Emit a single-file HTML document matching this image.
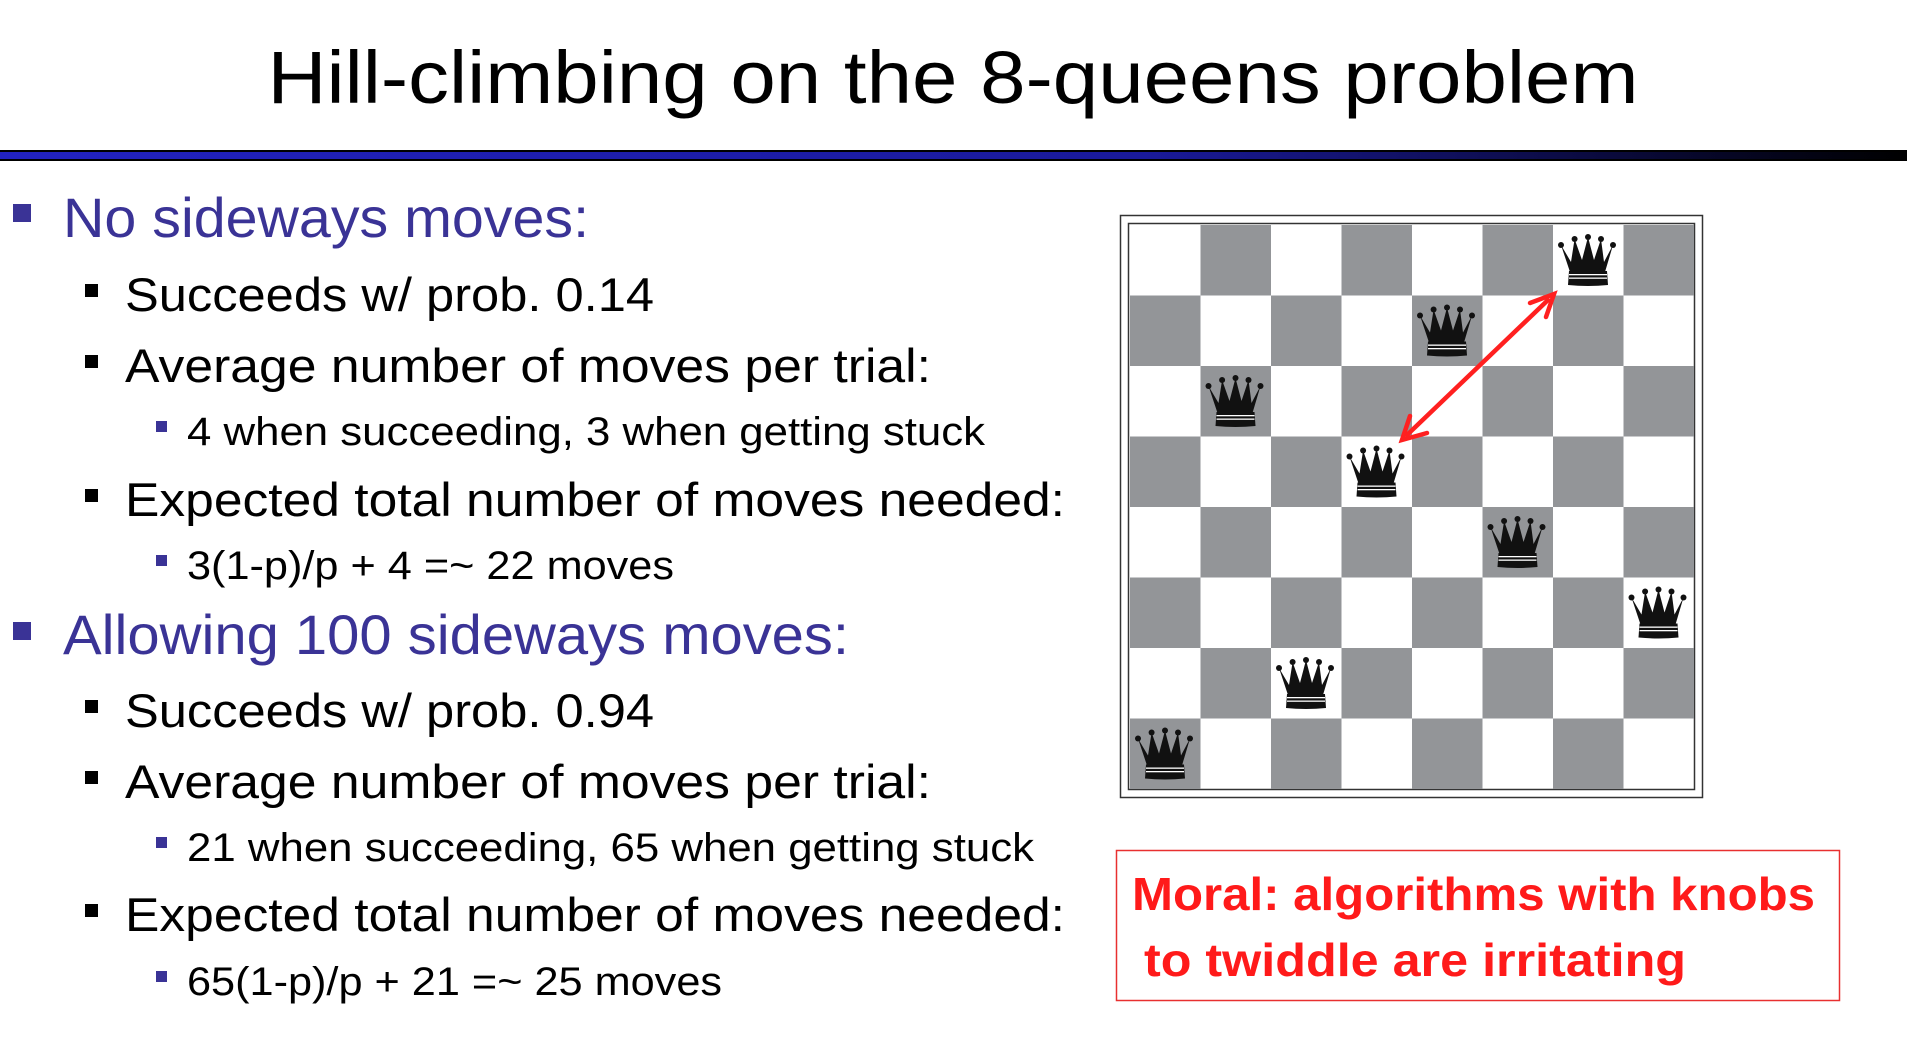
<!DOCTYPE html>
<html><head><meta charset="utf-8"><style>
html,body{margin:0;padding:0;background:#fff;width:1907px;height:1058px;overflow:hidden}
svg{display:block}
</style></head><body>
<svg width="1907" height="1058" viewBox="0 0 1907 1058" xmlns="http://www.w3.org/2000/svg" font-family="'Liberation Sans', sans-serif">
<defs>
<linearGradient id="rule" x1="0" x2="1" y1="0" y2="0">
<stop offset="0" stop-color="#2222c0"/><stop offset="0.6" stop-color="#1a1a9a"/><stop offset="1" stop-color="#000"/>
</linearGradient>
<g id="q">
<polygon points="8,20 18,37 21.6,14 29,35 35,12 41,35 48,14 51,37 60,20 52,47 17,47" fill="#111"/>
<circle cx="8" cy="20" r="3" fill="#111"/><circle cx="21.6" cy="14" r="3" fill="#111"/><circle cx="35" cy="12" r="3" fill="#111"/><circle cx="48" cy="14" r="3" fill="#111"/><circle cx="60" cy="20" r="3" fill="#111"/>
<path d="M16,46 H54 L55,60 Q35,62 15,60 Z" fill="#111"/>
<rect x="16" y="49" width="38" height="1.3" fill="#fff"/>
<rect x="16" y="52.5" width="38" height="1.3" fill="#fff"/>
</g>
</defs>
<text x="953" y="103" font-size="74" text-anchor="middle" textLength="1371" lengthAdjust="spacingAndGlyphs" fill="#000">Hill-climbing on the 8-queens problem</text>
<rect x="0" y="150" width="1907" height="11" fill="#000"/>
<rect x="0" y="152" width="1907" height="7" fill="url(#rule)"/>

<g fill="#3a3396">
<rect x="13" y="204" width="18" height="18"/>
<rect x="13" y="622" width="18" height="18"/>
<rect x="156" y="421" width="11" height="11"/>
<rect x="156" y="555" width="11" height="11"/>
<rect x="156" y="837" width="11" height="11"/>
<rect x="156" y="971" width="11" height="11"/>
</g>
<g fill="#000">
<rect x="85" y="284" width="13" height="13"/>
<rect x="85" y="355" width="13" height="13"/>
<rect x="85" y="489" width="13" height="13"/>
<rect x="85" y="700" width="13" height="13"/>
<rect x="85" y="771" width="13" height="13"/>
<rect x="85" y="904" width="13" height="13"/>
</g>
<g fill="#3a3396" font-size="56">
<text x="63" y="237" textLength="526" lengthAdjust="spacingAndGlyphs">No sideways moves:</text>
<text x="63" y="654" textLength="786" lengthAdjust="spacingAndGlyphs">Allowing 100 sideways moves:</text>
</g>
<g fill="#000" font-size="47">
<text x="125" y="311" textLength="529" lengthAdjust="spacingAndGlyphs">Succeeds w/ prob. 0.14</text>
<text x="125" y="382" textLength="806" lengthAdjust="spacingAndGlyphs">Average number of moves per trial:</text>
<text x="125" y="516" textLength="940" lengthAdjust="spacingAndGlyphs">Expected total number of moves needed:</text>
<text x="125" y="727" textLength="529" lengthAdjust="spacingAndGlyphs">Succeeds w/ prob. 0.94</text>
<text x="125" y="798" textLength="806" lengthAdjust="spacingAndGlyphs">Average number of moves per trial:</text>
<text x="125" y="931" textLength="940" lengthAdjust="spacingAndGlyphs">Expected total number of moves needed:</text>
</g>
<g fill="#000" font-size="40">
<text x="187" y="445" textLength="798" lengthAdjust="spacingAndGlyphs">4 when succeeding, 3 when getting stuck</text>
<text x="187" y="579" textLength="487" lengthAdjust="spacingAndGlyphs">3(1-p)/p + 4 =~ 22 moves</text>
<text x="187" y="861" textLength="847" lengthAdjust="spacingAndGlyphs">21 when succeeding, 65 when getting stuck</text>
<text x="187" y="995" textLength="535" lengthAdjust="spacingAndGlyphs">65(1-p)/p + 21 =~ 25 moves</text>
</g>

<!-- board -->
<rect x="1120.5" y="215.5" width="582" height="582" fill="#fff" stroke="#333" stroke-width="1.5"/>
<rect x="1128.5" y="223.5" width="566" height="566" fill="#fff" stroke="#333" stroke-width="1.5"/>
<g fill="#939598">
<rect x="1200.5" y="225" width="70.5" height="70.5"/><rect x="1341.5" y="225" width="70.5" height="70.5"/><rect x="1482.5" y="225" width="70.5" height="70.5"/><rect x="1623.5" y="225" width="70.5" height="70.5"/>
<rect x="1130" y="295.5" width="70.5" height="70.5"/><rect x="1271" y="295.5" width="70.5" height="70.5"/><rect x="1412" y="295.5" width="70.5" height="70.5"/><rect x="1553" y="295.5" width="70.5" height="70.5"/>
<rect x="1200.5" y="366" width="70.5" height="70.5"/><rect x="1341.5" y="366" width="70.5" height="70.5"/><rect x="1482.5" y="366" width="70.5" height="70.5"/><rect x="1623.5" y="366" width="70.5" height="70.5"/>
<rect x="1130" y="436.5" width="70.5" height="70.5"/><rect x="1271" y="436.5" width="70.5" height="70.5"/><rect x="1412" y="436.5" width="70.5" height="70.5"/><rect x="1553" y="436.5" width="70.5" height="70.5"/>
<rect x="1200.5" y="507" width="70.5" height="70.5"/><rect x="1341.5" y="507" width="70.5" height="70.5"/><rect x="1482.5" y="507" width="70.5" height="70.5"/><rect x="1623.5" y="507" width="70.5" height="70.5"/>
<rect x="1130" y="577.5" width="70.5" height="70.5"/><rect x="1271" y="577.5" width="70.5" height="70.5"/><rect x="1412" y="577.5" width="70.5" height="70.5"/><rect x="1553" y="577.5" width="70.5" height="70.5"/>
<rect x="1200.5" y="648" width="70.5" height="70.5"/><rect x="1341.5" y="648" width="70.5" height="70.5"/><rect x="1482.5" y="648" width="70.5" height="70.5"/><rect x="1623.5" y="648" width="70.5" height="70.5"/>
<rect x="1130" y="718.5" width="70.5" height="70.5"/><rect x="1271" y="718.5" width="70.5" height="70.5"/><rect x="1412" y="718.5" width="70.5" height="70.5"/><rect x="1553" y="718.5" width="70.5" height="70.5"/>
</g>
<use href="#q" x="1553" y="225"/>
<use href="#q" x="1412" y="295.5"/>
<use href="#q" x="1200.5" y="366"/>
<use href="#q" x="1341.5" y="436.5"/>
<use href="#q" x="1482.5" y="507"/>
<use href="#q" x="1623.5" y="577.5"/>
<use href="#q" x="1271" y="648"/>
<use href="#q" x="1130" y="718.5"/>
<!-- arrow -->
<g stroke="#ff2020" stroke-width="4.5" fill="none" stroke-linecap="round">
<line x1="1548" y1="300" x2="1407" y2="435"/>
<polyline points="1530,303 1554,294 1546,317"/>
<polyline points="1410,416 1402,440 1427,433"/>
</g>

<!-- moral box -->
<rect x="1116.5" y="850.5" width="723" height="150" fill="#fff" stroke="#e83030" stroke-width="1.5"/>
<g fill="#ff1a1a" font-size="46" font-weight="bold">
<text x="1132" y="910" textLength="683" lengthAdjust="spacingAndGlyphs">Moral: algorithms with knobs</text>
<text x="1144" y="976" textLength="542" lengthAdjust="spacingAndGlyphs">to twiddle are irritating</text>
</g>
</svg>
</body></html>
